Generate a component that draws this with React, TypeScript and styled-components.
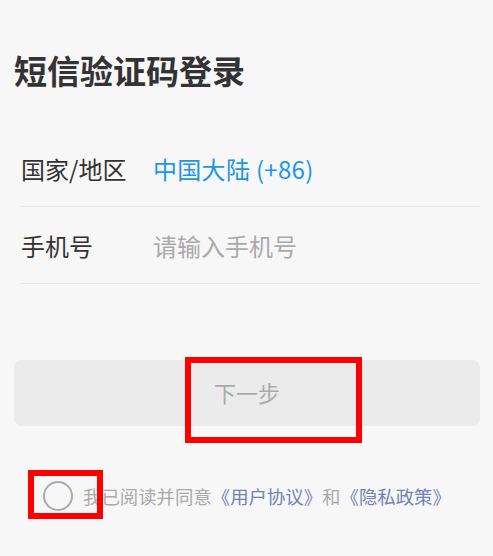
import React, { useState } from 'react';
import styled, { createGlobalStyle } from 'styled-components';

const GlobalStyle = createGlobalStyle`
  html, body {
    margin: 0;
    padding: 0;
    background: #f7f7f7;
  }
  body {
    font-family: "Noto Sans CJK SC", "Noto Sans", sans-serif;
  }
`;

const Page = styled.div`
  padding: 48px 13px 0 14px;
  min-height: 556px;
  box-sizing: border-box;
`;

const Title = styled.h1`
  margin: 0;
  font-size: 33px;
  line-height: 44px;
  font-weight: 600;
  color: #333;
`;

const Form = styled.div`
  margin: 38px 0 0 6px;
`;

const Row = styled.div`
  display: flex;
  align-items: center;
  height: 76px;
  border-bottom: 1px solid #e9e9e9;
  font-size: 24px;
`;

const Label = styled.div`
  width: 132px;
  padding-left: 1px;
  color: #333;
`;

const Value = styled.div<{ $tone: 'link' | 'placeholder' }>`
  color: ${p => (p.$tone === 'link' ? '#1d95e8' : '#aaa')};
  letter-spacing: ${p => (p.$tone === 'link' ? '0.3px' : '0')};
`;

const ButtonWrap = styled.div`
  position: relative;
  margin-top: 76px;
  width: 466px;
`;

const NextButton = styled.button`
  display: flex;
  align-items: center;
  justify-content: center;
  width: 100%;
  height: 66px;
  border: none;
  border-radius: 8px;
  background: #ebebeb;
  color: #aaa;
  font-family: inherit;
  font-size: 22px;
  padding: 0 0 2px;
  cursor: default;
`;

const Marker = styled.div<{ $left: number; $top: number; $w: number; $h: number }>`
  position: absolute;
  left: ${p => p.$left}px;
  top: ${p => p.$top}px;
  width: ${p => p.$w}px;
  height: ${p => p.$h}px;
  border: 6px solid #f00;
  box-sizing: border-box;
  pointer-events: none;
`;

const Agreement = styled.div`
  position: relative;
  display: flex;
  align-items: center;
  gap: 10px;
  margin: 55px 0 0 29px;
  height: 30px;
  font-size: 18.4px;
  color: #aaa;
`;

const Radio = styled.span<{ $checked: boolean }>`
  width: 30px;
  height: 30px;
  border-radius: 50%;
  border: 2px solid #aaa;
  box-sizing: border-box;
  background: ${p => (p.$checked ? '#1d95e8' : 'transparent')};
  flex-shrink: 0;
`;

const DocLink = styled.span`
  color: #7282b6;
`;

export default function App() {
  const [agreed, setAgreed] = useState(false);

  return (
    <>
      <GlobalStyle />
      <Page>
        <Title>短信验证码登录</Title>

        <Form>
          <Row>
            <Label>国家/地区</Label>
            <Value $tone="link">中国大陆 (+86)</Value>
          </Row>
          <Row>
            <Label>手机号</Label>
            <Value $tone="placeholder">请输入手机号</Value>
          </Row>
        </Form>

        <ButtonWrap>
          <NextButton>下一步</NextButton>
          <Marker $left={171} $top={-3} $w={177} $h={86} />
        </ButtonWrap>

        <Agreement onClick={() => setAgreed(!agreed)}>
          <Radio $checked={agreed} />
          <span>
            我已阅读并同意<DocLink>《用户协议》</DocLink>和<DocLink>《隐私政策》</DocLink>
          </span>
          <Marker $left={-15} $top={-11} $w={75} $h={49} />
        </Agreement>
      </Page>
    </>
  );
}
